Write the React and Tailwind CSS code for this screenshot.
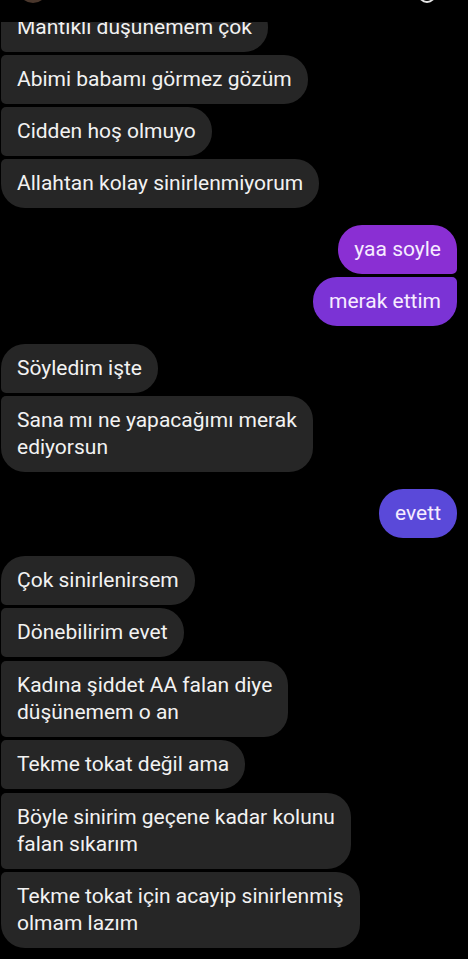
import React from "react";

const font = { fontFamily: "Roboto, 'Noto Sans', Arial, sans-serif" };

const messages = [
  { side: "l", pos: "mid", lines: ["Mantıklı düşünemem çok"], first: true },
  { side: "l", pos: "mid", lines: ["Abimi babamı görmez gözüm"] },
  { side: "l", pos: "mid", lines: ["Cidden hoş olmuyo"] },
  { side: "l", pos: "last", lines: ["Allahtan kolay sinirlenmiyorum"] },
  { side: "r", pos: "first", lines: ["yaa soyle"], color: "bg-[#8a2fd3]", gap: "mt-[14px]" },
  { side: "r", pos: "last", lines: ["merak ettim"], color: "bg-[#7b33d5]" },
  { side: "l", pos: "first", lines: ["Söyledim işte"], gap: "mt-[15px]" },
  { side: "l", pos: "last", lines: ["Sana mı ne yapacağımı merak", "ediyorsun"] },
  { side: "r", pos: "single", lines: ["evett"], color: "bg-[#5a49d9]", gap: "mt-[14px]" },
  { side: "l", pos: "first", lines: ["Çok sinirlenirsem"], gap: "mt-[15px]" },
  { side: "l", pos: "mid", lines: ["Dönebilirim evet"] },
  { side: "l", pos: "mid", lines: ["Kadına şiddet AA falan diye", "düşünemem o an"], gap: "mt-px" },
  { side: "l", pos: "mid", lines: ["Tekme tokat değil ama"] },
  { side: "l", pos: "mid", lines: ["Böyle sinirim geçene kadar kolunu", "falan sıkarım"], gap: "mt-px" },
  { side: "l", pos: "last", lines: ["Tekme tokat için acayip sinirlenmiş", "olmam lazım"] },
];

const leftCorners = {
  first: "rounded-tl-[24px] rounded-bl-[5px]",
  mid: "rounded-tl-[5px] rounded-bl-[5px]",
  last: "rounded-tl-[5px] rounded-bl-[24px]",
  single: "rounded-tl-[24px] rounded-bl-[24px]",
};

const rightCorners = {
  first: "rounded-tr-[24px] rounded-br-[5px]",
  mid: "rounded-tr-[5px] rounded-br-[5px]",
  last: "rounded-tr-[5px] rounded-br-[24px]",
  single: "rounded-tr-[24px] rounded-br-[24px]",
};

const Bubble = ({ msg }) => {
  const isLeft = msg.side === "l";
  const shape = isLeft
    ? `${leftCorners[msg.pos]} rounded-tr-[24px] rounded-br-[24px] bg-[#262626] text-[#f2f2f2] self-start`
    : `${rightCorners[msg.pos]} rounded-tl-[24px] rounded-bl-[24px] ${msg.color} text-[#f6ecff] self-end`;

  return (
    <div
      className={`${shape} ${msg.gap || ""} ${msg.first ? "-mt-[19px]" : ""} px-4 py-[11px] text-[21px] leading-[27px] whitespace-nowrap`}
    >
      {msg.lines.map((line, i) => (
        <div key={i}>{line}</div>
      ))}
    </div>
  );
};

export default function App() {
  return (
    <div className="w-[468px] h-[959px] bg-black overflow-hidden flex flex-col" style={font}>
      <div className="h-[22px] shrink-0 flex items-end justify-between overflow-hidden pl-[18px] pr-[32px] relative z-10 bg-black">
        <div className="w-[30px] h-[30px] shrink-0 rounded-full bg-[#4a372c] translate-y-[-19px]" />
        <div className="w-[18px] h-[18px] shrink-0 rounded-full border-2 border-[#e6e6e6] translate-y-[-19px]" />
      </div>
      <div className="flex-1 overflow-hidden flex flex-col gap-[3px] pl-px pr-[11px]">
        {messages.map((m, i) => (
          <Bubble key={i} msg={m} />
        ))}
      </div>
    </div>
  );
}
